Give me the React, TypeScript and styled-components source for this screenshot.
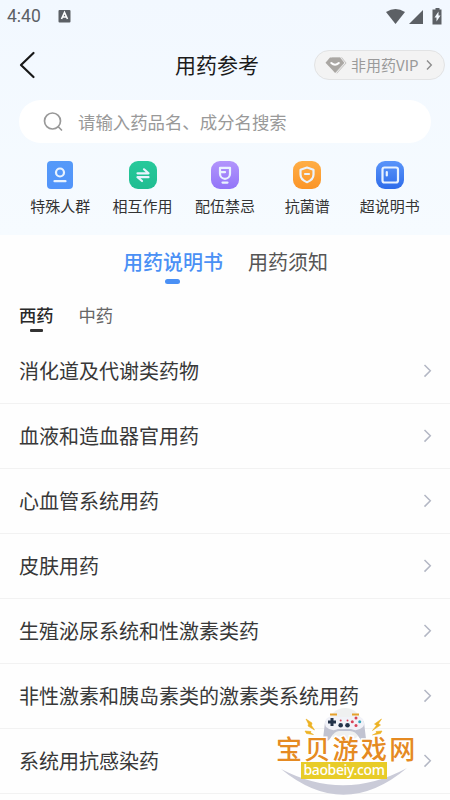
import React from "react";
import styled, { createGlobalStyle } from "styled-components";

const GlobalStyle = createGlobalStyle`
  * { box-sizing: border-box; }
  html, body { margin: 0; padding: 0; }
  body {
    width: 450px; height: 800px; overflow: hidden; background: #fefefe;
    font-family: "Noto Sans CJK SC", sans-serif; color: #333;
  }
`;

const Screen = styled.main`
  position: relative;
  width: 450px;
  height: 800px;
  overflow: hidden;
  display: flex;
  flex-direction: column;
`;

const Top = styled.header`
  height: 235px;
  flex: none;
  background: linear-gradient(#f2f8ff, #f6fbff);
`;

const StatusBar = styled.div`
  height: 32px;
  display: flex;
  align-items: center;
  padding: 0 8px 0 7px;
  color: #5c6065;
`;

const Clock = styled.span`
  font: 400 17.5px/20px Roboto, sans-serif;
  width: 51px;
`;

const StatusIcons = styled.svg`
  margin-left: auto;
`;

const NavBar = styled.div`
  height: 68px;
  display: grid;
  grid-template-columns: 175px 1fr 131px;
  align-items: center;
  padding: 0 5px 2px 0;
`;

const Back = styled.svg`
  margin-left: 18px;
`;

const Title = styled.h1`
  margin: 0 0 2px;
  font-size: 21px;
  line-height: 30px;
  font-weight: 400;
  color: #1b1b1b;
  white-space: nowrap;
`;

const Vip = styled.button`
  height: 30px;
  width: 131px;
  padding: 0 10px;
  display: flex;
  align-items: center;
  border: 1px solid #e2e3e4;
  border-radius: 15px;
  background: #f3f3f3;
  color: #9a9a9a;
  font: 400 15px/20px "Noto Sans CJK SC", sans-serif;
  white-space: nowrap;
`;

const VipText = styled.span`
  margin-left: 4px;
  width: 75px;
  text-align: left;
`;

const Search = styled.div`
  margin: 0 19px;
  height: 43px;
  border-radius: 22px;
  background: #fff;
  display: flex;
  align-items: center;
  padding-left: 23px;
  gap: 13px;
  font-size: 17.4px;
  line-height: 26px;
  color: #999;
`;

const Shortcuts = styled.nav`
  display: grid;
  grid-template-columns: repeat(5, 82.4px);
  padding: 18px 0 0 19px;
`;

const Shortcut = styled.a`
  display: flex;
  flex-direction: column;
  align-items: center;
  font-size: 15px;
  line-height: 22px;
  gap: 6px;
  color: #333;
`;

const MainTabs = styled.div`
  height: 54px;
  display: flex;
  padding: 12px 0 0 123px;
  gap: 25px;
  flex: none;
`;

const MainTab = styled.span<{ $active?: boolean }>`
  display: flex;
  flex-direction: column;
  align-items: center;
  font-size: 20px;
  line-height: 29px;
  font-weight: ${(p) => (p.$active ? 500 : 400)};
  color: ${(p) => (p.$active ? "#4a90f5" : "#555")};
  &::after {
    content: "";
    width: 15px;
    height: 5px;
    margin: 3px 2px 0 0;
    border-radius: 3px;
    background: ${(p) => (p.$active ? "#4a90f5" : "transparent")};
  }
`;

const SubTabs = styled.div`
  height: 50px;
  padding: 13px 0 0 19px;
  display: flex;
  gap: 25px;
  flex: none;
`;

const SubTab = styled.span<{ $active?: boolean }>`
  display: flex;
  flex-direction: column;
  align-items: center;
  font-size: 17.3px;
  line-height: 25px;
  font-weight: ${(p) => (p.$active ? 500 : 400)};
  color: ${(p) => (p.$active ? "#292929" : "#666")};
  &::after {
    content: "";
    width: 13px;
    height: 3px;
    margin-top: 2px;
    border-radius: 1px;
    background: ${(p) => (p.$active ? "#333" : "transparent")};
  }
`;

const List = styled.ul`
  margin: 0;
  padding: 0;
  list-style: none;
`;

const Row = styled.li`
  height: 65px;
  display: flex;
  align-items: center;
  justify-content: space-between;
  padding: 0 16px 0 19px;
  border-bottom: 1px solid #f2f2f2;
  font-size: 20px;
  line-height: 30px;
  color: #383838;
`;

const Watermark = styled.div`
  position: absolute;
  left: 270px;
  top: 705px;
  width: 150px;
  height: 92px;
`;

const MarkArt = styled.svg`
  position: absolute;
  inset: 0;
`;

const MarkName = styled.div`
  position: absolute;
  left: 6px;
  top: 30px;
  font-size: 26px;
  line-height: 26px;
  letter-spacing: 2.3px;
  font-weight: 500;
  color: #e58a22;
  white-space: nowrap;
  -webkit-text-stroke: 3px #fff;
  paint-order: stroke fill;
`;

const MarkUrl = styled.div`
  position: absolute;
  left: 31px;
  top: 57px;
  width: 86px;
  height: 17px;
  background: #e8cc28;
  color: #fff;
  display: flex;
  justify-content: center;
  font: 500 14px/15px "Noto Sans", sans-serif;
  letter-spacing: -0.35px;
`;

const Chevron = () => (
  <svg width="14" height="16" viewBox="0 0 14 16" fill="none" stroke="#b3b7c4" strokeWidth="1.5">
    <path d="M4.500 2l5.800 5.800-5.800 5.800" />
  </svg>
);

const shortcuts = [
  {
    label: "特殊人群", from: "#559af9", to: "#5294fa", w: 26, r: 4,
    art: <><circle cx="14" cy="11.5" r="4" /><path d="M8.500 20.200h11" /></>,
  },
  {
    label: "相互作用", from: "#27c99b", to: "#20bd91", w: 28, r: 9,
    art: <path d="M8.500 12.300h11l-4.500-4M19.500 16.200h-11l4.500 3.800" />,
  },
  {
    label: "配伍禁忌", from: "#b295fc", to: "#9274f8", w: 28, r: 9,
    art: <><path d="M9 6.800h10v6a5 5 0 0 1-10 0zM11.500 21.600h5M9.500 11.200h4.500" /></>,
  },
  {
    label: "抗菌谱", from: "#ffae46", to: "#fb9528", w: 28, r: 9,
    art: <><path d="M14 6.500l6.500 2.200v4.800c0 3.700-2.700 6.200-6.500 7.700-3.800-1.500-6.500-4-6.500-7.700V8.700z" /><path d="M12 13h4" /></>,
  },
  {
    label: "超说明书", from: "#5a95fa", to: "#2e6cea", w: 28, r: 9,
    art: <><rect x="6.500" y="6.500" width="15.500" height="15" rx="2" /><path d="M10.800 11v3.500" /></>,
  },
];

const drugs = [
  "消化道及代谢类药物",
  "血液和造血器官用药",
  "心血管系统用药",
  "皮肤用药",
  "生殖泌尿系统和性激素类药",
  "非性激素和胰岛素类的激素类系统用药",
  "系统用抗感染药",
];

export default function App() {
  return (
    <>
      <GlobalStyle />
      <Screen>
        <Top>
          <StatusBar>
            <Clock>4:40</Clock>
            <svg width="13" height="13" viewBox="0 0 13 13">
              <rect x=".5" width="12" height="12.500" rx="1" fill="#5c6065" />
              <path d="M3.500 9l3-6.500 3 6.500M4.500 7h4" fill="none" stroke="#fff" strokeWidth="1.600" />
            </svg>
            <StatusIcons width="56" height="18" viewBox="0 0 56 18" fill="#5c6065">
              <path d="M0 5Q9.500 -1 19 5L9.500 17z" />
              <path d="M23 17L37 3v14z" />
              <path fillRule="evenodd" d="M49.500 1h4v1.500h2v15h-9v-15h3zM52.500 4.500l-4 6h2v4l4-6h-2z" />
            </StatusIcons>
          </StatusBar>
          <NavBar>
            <Back width="20" height="30" viewBox="0 0 20 30" fill="none" stroke="#181818" strokeWidth="2.200" strokeLinecap="round" strokeLinejoin="round">
              <path d="M15.500 3L3 15l12.500 12" />
            </Back>
            <Title>用药参考</Title>
            <Vip>
              <svg width="22" height="17" viewBox="0 0 22 17">
                <path d="M7 .500h10l4.500 5.500-9.500 10.500L9 15z" fill="#c3c1bf" />
                <path d="M15.500 .500l4.500 5.500-9 10" fill="none" stroke="#eee" strokeWidth="1" />
                <path d="M5 .500h10l4 5.200-9 10-9.500-10z" fill="#aaa7a3" />
                <path d="M6.300 6q3.700 3.500 7.500 0" fill="none" stroke="#fff" strokeWidth="2" strokeLinecap="round" />
              </svg>
              <VipText>非用药VIP</VipText>
              <svg width="7" height="12" viewBox="0 0 7 12" fill="none" stroke="#8d8d8d" strokeWidth="1.400">
                <path d="M1 1.500l4.300 4.500L1 10.500" />
              </svg>
            </Vip>
          </NavBar>
          <Search>
            <svg width="23" height="23" viewBox="0 0 23 23" fill="none" stroke="#999" strokeWidth="1.700" strokeLinecap="round">
              <circle cx="10.500" cy="11" r="8" />
              <path d="M16.500 17l3 3" />
            </svg>
            请输入药品名、成分名搜索
          </Search>
          <Shortcuts>
            {shortcuts.map((s, i) => (
              <Shortcut key={s.label}>
                <svg width="28" height="28" viewBox="0 0 28 28" fill="none">
                  <defs>
                    <linearGradient id={`tile${i}`} x2="0" y2="1">
                      <stop stopColor={s.from} />
                      <stop offset="1" stopColor={s.to} />
                    </linearGradient>
                  </defs>
                  <rect x={(28 - s.w) / 2} width={s.w} height="28" rx={s.r} fill={`url(#tile${i})`} />
                  <g stroke="#e9f3ff" strokeWidth="2.200" strokeLinejoin="round" strokeLinecap="round">{s.art}</g>
                </svg>
                {s.label}
              </Shortcut>
            ))}
          </Shortcuts>
        </Top>
        <MainTabs>
          <MainTab $active>用药说明书</MainTab>
          <MainTab>用药须知</MainTab>
        </MainTabs>
        <SubTabs>
          <SubTab $active>西药</SubTab>
          <SubTab>中药</SubTab>
        </SubTabs>
        <List>
          {drugs.map((name) => (
            <Row key={name}>
              {name}
              <Chevron />
            </Row>
          ))}
        </List>
        <Watermark>
          <MarkArt width="150" height="92" viewBox="0 0 150 92">
            <circle cx="75" cy="20" r="17" fill="#eff0f0" />
            <path d="M11 64Q74 97 137 63Q74 116 11 64z" fill="#cacbd8" />
            <path d="M56 17L54 34Q57 37 60 32Q64 25 69 25H80Q86 25 90 32Q93 37 95 34L93 17z" fill="#c1c3d1" stroke="#c1c3d1" strokeWidth="2" strokeLinejoin="round" />
            <path d="M56 14Q60 10 66 12H83Q89 10 93 14Q95 19 93 22Q87 27 81 24H68Q62 27 56 22Q54 18 56 14z" fill="#f1f2f8" />
            <path d="M60 9.500h7M82 9.500h7" stroke="#e6a12c" strokeWidth="2" />
            <path d="M62 13v8M58 17h8" stroke="#23334a" strokeWidth="3" />
            <g fill="#d94358">
              <circle cx="86" cy="13" r="1.500" />
              <circle cx="86" cy="20.500" r="1.500" />
              <circle cx="82.300" cy="16.800" r="1.500" />
              <circle cx="70.700" cy="15.500" r="1" />
              <circle cx="77.500" cy="15.500" r="1" />
            </g>
            <circle cx="89.700" cy="16.800" r="1.500" fill="#36a4bb" />
            <g fill="#23334a">
              <circle cx="70.700" cy="20.300" r="2.300" />
              <circle cx="77.500" cy="20.300" r="2.300" />
            </g>
            <path d="M36 14l6 4-.5 2.500 3 4.500-6.500-4 .5-2zM111.500 14l-7 5 2 1.500-4 5 8-5.500-2-1.500zM35 26l6 .5-.5 1.500 3 1.500-7-1zM112 26l-6 .5.5 1.500-4 2 8-1.500z" fill="#edb223" stroke="#edb223" strokeWidth=".6" />
          </MarkArt>
          <MarkName>宝贝游戏网</MarkName>
          <MarkUrl>baobeiy.com</MarkUrl>
        </Watermark>
      </Screen>
    </>
  );
}
